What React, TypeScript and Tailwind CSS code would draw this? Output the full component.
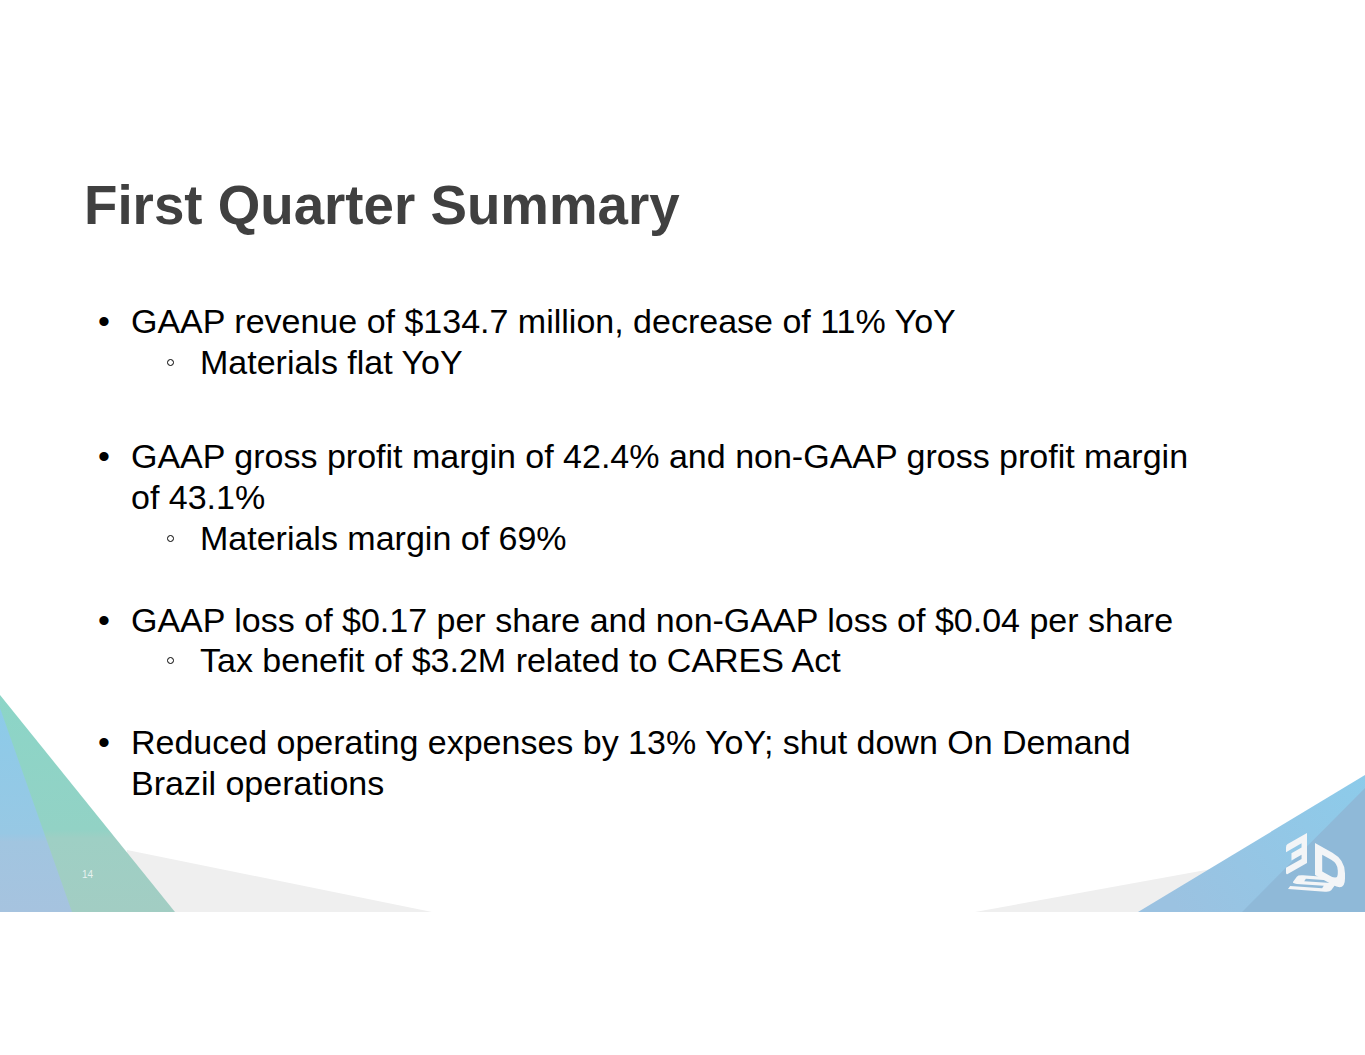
import React from "react";

/* ─── Slide content ──────────────────────────────────────────────────────── */

type Bullet = { text: string; subs: string[]; gap: string };

const bullets: Bullet[] = [
  {
    text: "GAAP revenue of $134.7 million, decrease of 11% YoY",
    subs: ["Materials flat YoY"],
    gap: "mb-[54px]",
  },
  {
    text: "GAAP gross profit margin of 42.4% and non-GAAP gross profit margin of 43.1%",
    subs: ["Materials margin of 69%"],
    gap: "mb-[41px]",
  },
  {
    text: "GAAP loss of $0.17 per share and non-GAAP loss of $0.04 per share",
    subs: ["Tax benefit of $3.2M related to CARES Act"],
    gap: "mb-[41px]",
  },
  {
    text: "Reduced operating expenses by 13% YoY; shut down On Demand Brazil operations",
    subs: [],
    gap: "",
  },
];

/* ─── Background shapes + logo ───────────────────────────────────────────── */

function SlideArt() {
  return (
    <svg className="absolute inset-0 w-full h-full" viewBox="0 0 1365 912" preserveAspectRatio="none">
      <defs>
        <linearGradient id="teal" x1="0" y1="695" x2="0" y2="912" gradientUnits="userSpaceOnUse">
          <stop offset="0" stopColor="#8cd5c7" />
          <stop offset="0.62" stopColor="#92d2c5" />
          <stop offset="0.66" stopColor="#9ecfc4" />
          <stop offset="1" stopColor="#a2cdc3" />
        </linearGradient>
        <linearGradient id="blueL" x1="0" y1="705" x2="0" y2="912" gradientUnits="userSpaceOnUse">
          <stop offset="0" stopColor="#8ccbe9" />
          <stop offset="0.62" stopColor="#97c8e4" />
          <stop offset="0.66" stopColor="#a1c5e0" />
          <stop offset="1" stopColor="#a6c3df" />
        </linearGradient>
        <linearGradient id="blueR" x1="1365" y1="775" x2="1180" y2="912" gradientUnits="userSpaceOnUse">
          <stop offset="0" stopColor="#8ccbea" />
          <stop offset="1" stopColor="#9bc2e1" />
        </linearGradient>
      </defs>

      {/* left */}
      <polygon points="127,850 432,912 127,912" fill="#efefef" />
      <polygon points="0,695 175,912 0,912" fill="url(#teal)" />
      <polygon points="0,708 72,912 0,912" fill="url(#blueL)" />
      <text x="82" y="878" fontSize="10" fill="#ffffff" fillOpacity="0.75" fontFamily="'Liberation Sans', Arial, sans-serif">
        14
      </text>

      {/* right */}
      <polygon points="975,912 1250,862 1250,912" fill="#efefef" />
      <polygon points="1138,912 1365,775 1365,912" fill="url(#blueR)" />
      <polygon points="1242,912 1365,788 1365,912" fill="#8fb9d8" />

      {/* 3D Systems cube mark */}
      <g fill="#f3f5f7">
        <path
          transform="matrix(0.21 -0.12 0 0.3 1286 845)"
          d="M8 0H100V100H8Q0 100 0 92V76H74V62H26V38H74V24H0V8Q0 0 8 0Z"
        />
        <path
          transform="matrix(0.3 0.17 0 0.32 1315 843)"
          fillRule="evenodd"
          d="M0 0H58Q100 0 100 42V58Q100 100 58 100H0Z M24 24H54Q76 24 76 46V54Q76 76 54 76H24Z"
        />
        <path
          transform="matrix(0.42 0.03 -0.1 0.14 1298 875)"
          d="M100 0H12Q0 0 0 12V49Q0 61 12 61H76V78H0V100H88Q100 100 100 88V51Q100 39 88 39H24V22H100Z"
        />
      </g>
    </svg>
  );
}

/* ─── Slide ──────────────────────────────────────────────────────────────── */

export default function App() {
  return (
    <div className="bg-white min-h-[1055px]" style={{ fontFamily: "'Liberation Sans', Arial, sans-serif" }}>
      <div className="relative h-[912px] w-full overflow-hidden">
        <SlideArt />

        <div className="relative pt-[178px]">
          <h1 className="ml-[84px] text-[54.7px] leading-[55px] font-bold text-[#404040]">First Quarter Summary</h1>

          <ul className="mt-[68px] ml-[98px] text-[34px] leading-[40.7px] text-black">
            {bullets.map((b, i) => (
              <li key={i} className={b.gap}>
                <div className="flex">
                  <span className="w-[33px] shrink-0">•</span>
                  <span className="w-[1084px]">{b.text}</span>
                </div>
                {b.subs.map((s, j) => (
                  <div key={j} className="flex ml-[69px]">
                    <span className="w-[33px] shrink-0 flex items-center">
                      <span className="w-[7px] h-[7px] rounded-full border border-black" />
                    </span>
                    <span>{s}</span>
                  </div>
                ))}
              </li>
            ))}
          </ul>
        </div>
      </div>
    </div>
  );
}
